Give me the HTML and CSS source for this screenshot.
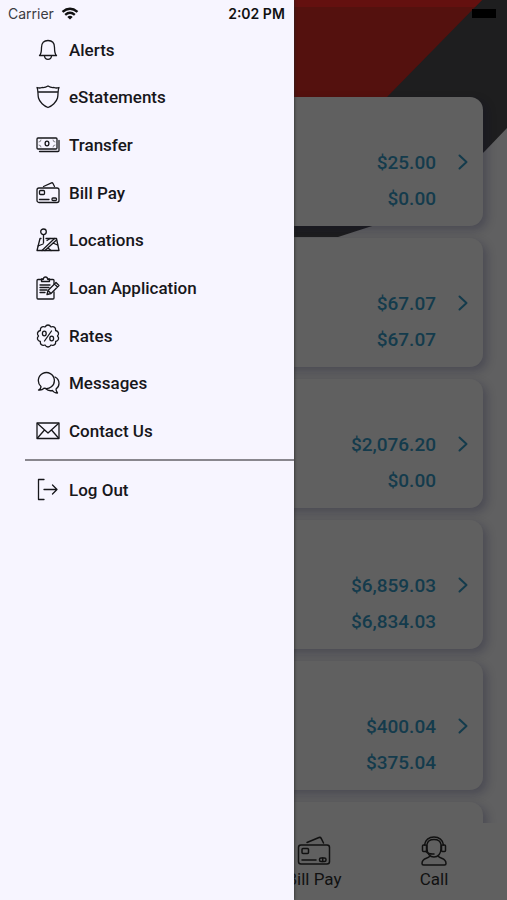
FILE: index.html
```html
<!DOCTYPE html>
<html lang="en">
<head>
<meta charset="utf-8">
<meta name="viewport" content="width=device-width, initial-scale=1">
<title>Accounts</title>
<link rel="stylesheet" href="styles.css">
</head>
<body>
<div class="app">
  <svg class="artwork" viewBox="0 0 507 240" preserveAspectRatio="xMaxYMin slice" aria-hidden="true">
    <path fill="#1e1e1f" d="M0 0H507V128L485 151Q420 215 369 227L338 237H0Z"/>
    <path fill="#54110e" d="M0 0H482L387 97L340 144H0Z"/>
    <path fill="#64100f" d="M0 0H482L475 7H0Z"/>
  </svg>

  <main class="accounts">
    <a class="card" href="#"><span class="amounts"><span>$25.00</span><span>$0.00</span></span><svg class="chevron" viewBox="0 0 10 16"><path d="M1.500 1.500L8.500 8L1.500 14.500"/></svg></a>
    <a class="card" href="#"><span class="amounts"><span>$67.07</span><span>$67.07</span></span><svg class="chevron" viewBox="0 0 10 16"><path d="M1.500 1.500L8.500 8L1.500 14.500"/></svg></a>
    <a class="card" href="#"><span class="amounts"><span>$2,076.20</span><span>$0.00</span></span><svg class="chevron" viewBox="0 0 10 16"><path d="M1.500 1.500L8.500 8L1.500 14.500"/></svg></a>
    <a class="card" href="#"><span class="amounts"><span>$6,859.03</span><span>$6,834.03</span></span><svg class="chevron" viewBox="0 0 10 16"><path d="M1.500 1.500L8.500 8L1.500 14.500"/></svg></a>
    <a class="card" href="#"><span class="amounts"><span>$400.04</span><span>$375.04</span></span><svg class="chevron" viewBox="0 0 10 16"><path d="M1.500 1.500L8.500 8L1.500 14.500"/></svg></a>
    <div class="card"></div>
  </main>

  <nav class="tabs" aria-label="Quick actions">
    <button class="tab" type="button">
      <svg class="tab-icon" viewBox="0 0 34 30"><rect x="1.500" y="9" width="31" height="19" rx="2.500"/><path d="M10 6.500L22 1.500Q23.500 1 24.200 2.300L26.500 7"/><rect x="5" y="12.500" width="6.500" height="5" rx="1"/><path d="M5 24H19"/><rect x="22.500" y="22" width="6.500" height="3.500" rx="1.500"/><path d="M25.700 22V25.500"/></svg>
      <span>Bill Pay</span>
    </button>
    <button class="tab" type="button">
      <svg class="tab-icon" viewBox="0 0 34 30"><path d="M10 8.500C10.500 5 13 3.500 17 3.500S23.500 5 24 8.500V13C24 17.500 21 21 17 21S10 17.500 10 13Z"/><path d="M7.500 9C8 4 12 1 17 1S26 4 26.500 9"/><rect x="5.500" y="9" width="4" height="6.500" rx="1"/><rect x="24.500" y="9" width="4" height="6.500" rx="1"/><path d="M9 15.500Q11.500 18.500 17 18"/><path d="M12.500 20.500C10 23 5 22 5 27.500Q5 29 6.500 29H27.500Q29 29 29 27.500C29 22 24 23 21.500 20.500"/></svg>
      <span>Call</span>
    </button>
  </nav>

  <aside class="drawer">
    <nav aria-label="Main menu">
      <ul class="menu">
        <li><a href="#"><svg viewBox="0 0 24 24"><path d="M3.500 17.500C5.500 16 5.500 13 5.500 9.500C5.500 5 8 2.500 12 2.500S18.500 5 18.500 9.500C18.500 13 18.500 16 20.500 17.500Z"/><path d="M8.500 18C9 22.500 15 22.500 15.500 18"/></svg>Alerts</a></li>
        <li><a href="#"><svg viewBox="0 0 24 24"><path d="M1 2.500Q3.500 3.500 6 2.500Q9 3 12 1Q15 3 18 2.500Q20.500 3.500 23 2.500C21.500 5 22.500 9 21.500 13C20.500 17 16 21 12 22.500C8 21 3.500 17 2.500 13C1.500 9 2.500 5 1 2.500Z"/><path d="M2.500 7H21.500"/></svg>eStatements</a></li>
        <li><a href="#"><svg viewBox="0 0 24 24"><rect x="1" y="5" width="20" height="11" rx="1"/><path d="M23 7.500V17.500Q23 18.500 22 18.500H3.500"/><path d="M3 9Q5 9 5 7M19 9Q17 9 17 7M3 12Q5 12 5 14M19 12Q17 12 17 14" stroke-width=".5"/><ellipse cx="11" cy="10.500" rx="1.900" ry="2.300"/></svg>Transfer</a></li>
        <li><a href="#"><svg viewBox="0 0 24 24"><rect x="1" y="7" width="22" height="14.500" rx="2"/><path d="M7.500 5.500L15.500 1.800Q16.500 1.500 17 2.500L18.500 5.500"/><rect x="3.500" y="9.500" width="5" height="4" rx="1"/><path d="M3.500 18.500H13"/><rect x="16" y="17" width="4.500" height="2.500" rx="1"/></svg>Bill Pay</a></li>
        <li><a href="#"><svg viewBox="0 0 24 24"><circle cx="7.500" cy="3.800" r="2.800"/><path d="M7.500 6.600V15M5 10.500H4L1 22.500H23L20.500 10.500H10"/><path d="M2 18L7 16M6 22.500L18.500 10.500M9 22.500L20.500 12M12 20L15 22.500M14 10.500L11 12.500M17 15L21.500 17"/></svg>Locations</a></li>
        <li><a href="#"><svg viewBox="0 0 24 24"><path d="M7 3.500H2Q1 3.500 1 4.500V22Q1 23 2 23H17Q18 23 18 22V16M12 3.500H17Q18 3.500 18 4.500V8"/><path d="M5.500 5.500V3H7.500Q7.500 1 9.500 1T11.500 3H13.500V5.500Z"/><path d="M4 9H14M4 11.500H13M4 14H11M4 16.500H9"/><path d="M11 18.500L12 14.500L20 6.500L23 9.500L15 17.500ZM18.500 8L21.500 11M12 14.500L15 17.500"/></svg>Loan Application</a></li>
        <li><a href="#"><svg viewBox="0 0 24 24"><path d="M12 1Q13.800 1 15 3Q17.200 2 18.800 3.500Q19.800 4.500 19.600 6.500Q22 7 22.500 9Q22.800 10.500 21.500 12Q23 13.600 22.500 15.200Q22 17 19.700 17.500Q19.800 19.600 18.800 20.500Q17.200 22 15 21Q13.800 23 12 23Q10.200 23 9 21Q6.800 22 5.200 20.500Q4.200 19.600 4.300 17.500Q2 17 1.500 15.200Q1 13.600 2.500 12Q1.200 10.500 1.500 9Q2 7 4.400 6.500Q4.200 4.500 5.200 3.500Q6.800 2 9 3Q10.200 1 12 1Z"/><path d="M15.500 7L8.500 17"/><ellipse cx="8.300" cy="9.500" rx="1.900" ry="2.300"/><ellipse cx="15.700" cy="14.500" rx="1.900" ry="2.300"/></svg>Rates</a></li>
        <li><a href="#"><svg viewBox="0 0 24 24"><path d="M5 15.500Q5 18 2.500 19Q6 19.500 8 17.200A8 8 0 1 0 5 15.500Z"/><path d="M19 6Q23 8 23 12.500Q23 16 20 18Q20 20 21.500 22Q18 22 16.500 19.500Q12.500 20.500 9.500 17.500"/></svg>Messages</a></li>
        <li><a href="#"><svg viewBox="0 0 24 24"><rect x="1" y="4" width="22" height="15.500"/><path d="M1.500 4.500L12 14L22.500 4.500M1.500 19L8.500 11M22.500 19L15.500 11"/></svg>Contact Us</a></li>
      </ul>
      <a class="logout" href="#"><svg viewBox="0 0 24 24"><path d="M8 1.500H2.500V21.500H8M8 11.500H21M16.500 7L21 11.500L16.500 16"/></svg>Log Out</a>
    </nav>
  </aside>

  <header class="status">
    <span class="carrier">Carrier</span>
    <svg class="wifi" viewBox="0 0 18 13" aria-label="Wi-Fi"><path d="M1.500 4.800Q9-1.400 16.500 4.800M4.200 7.800Q9 3.800 13.800 7.800"/><path class="dot" d="M9 12.500L6.300 9.900Q9 7.800 11.700 9.900Z"/></svg>
    <time class="clock">2:02 PM</time>
    <span class="battery"></span>
  </header>
</div>
</body>
</html>
```
FILE: styles.css
```css
* {
  box-sizing: border-box;
}

body {
  margin: 0;
  font-family: Roboto, "Liberation Sans", sans-serif;
  background: #606061;
}

a {
  color: inherit;
  text-decoration: none;
}

svg {
  flex: none;
  fill: none;
  stroke: currentColor;
  stroke-linecap: round;
  stroke-linejoin: round;
}

.app {
  position: relative;
  display: flex;
  flex-direction: column;
  height: 100vh;
  overflow: hidden;
}

.artwork {
  position: absolute;
  top: 0;
  left: 0;
  width: 100%;
  height: 240px;
  stroke: none;
}

/* Account list */
.accounts {
  position: relative;
  flex: 1;
  min-height: 0;
  display: flex;
  flex-direction: column;
  gap: 12px;
  padding: 97px 24px 0;
  overflow: hidden;
}

.card {
  flex: none;
  display: flex;
  justify-content: flex-end;
  align-items: flex-start;
  gap: 22px;
  height: 129px;
  padding: 48px 15px 0;
  border-radius: 13px;
  background: #606060;
  box-shadow: 4px 4px 10px rgba(10, 10, 45, 0.25);
  color: #143b4c;
}

.amounts {
  display: flex;
  flex-direction: column;
  text-align: right;
  font-size: 19px;
  font-weight: 500;
  line-height: 36px;
}

.chevron {
  width: 10px;
  height: 16px;
  margin-top: 9px;
  stroke-width: 2;
}

/* Bottom tabs */
.tabs {
  position: relative;
  display: flex;
  justify-content: flex-end;
  height: 77px;
  padding: 0 13px;
  background: #606060;
}

.tab {
  display: flex;
  flex-direction: column;
  align-items: center;
  gap: 3px;
  width: 120px;
  padding: 13px 0 0;
  border: 0;
  background: none;
  color: #111;
  font: 17px/20px Roboto, "Liberation Sans", sans-serif;
}

.tab-icon {
  width: 34px;
  height: 30px;
  stroke-width: 1.5;
}

/* Drawer */
.drawer {
  position: absolute;
  top: 0;
  bottom: 0;
  left: 0;
  width: 58%;
  padding-top: 26px;
  background: #f7f5ff;
  box-shadow: 0 0 3px #222;
  color: #17171b;
  font-size: 17px;
  font-weight: 500;
}

.menu {
  display: grid;
  grid-auto-rows: 1fr;
  height: 429px;
  margin: 0;
  padding: 0;
  list-style: none;
}

.menu a,
.logout {
  display: flex;
  align-items: center;
  gap: 9px;
  height: 100%;
  padding-left: 36px;
}

.menu svg,
.logout svg {
  width: 24px;
  height: 24px;
  stroke-width: 1.3;
}

.logout {
  height: 60px;
  margin: 4px 0 0 25px;
  padding-left: 11px;
  border-top: 2px solid #89878e;
}

/* Status bar */
.status {
  position: absolute;
  top: 0;
  left: 0;
  display: flex;
  align-items: center;
  width: 100%;
  height: 27px;
  padding: 0 11px 0 8px;
  color: #111;
  font: 14px/16px Inter, "Liberation Sans", sans-serif;
}

.carrier {
  color: #3b3b42;
}

.wifi {
  width: 18px;
  height: 13px;
  margin-left: 7px;
  stroke-width: 2.4;
  stroke-linecap: butt;
}

.wifi .dot {
  fill: currentColor;
  stroke: none;
}

.clock {
  position: absolute;
  left: 50%;
  transform: translateX(-50%);
  margin-left: 3px;
  font-weight: 600;
}

.battery {
  width: 24px;
  height: 9px;
  margin-left: auto;
  background: #000;
}
```
